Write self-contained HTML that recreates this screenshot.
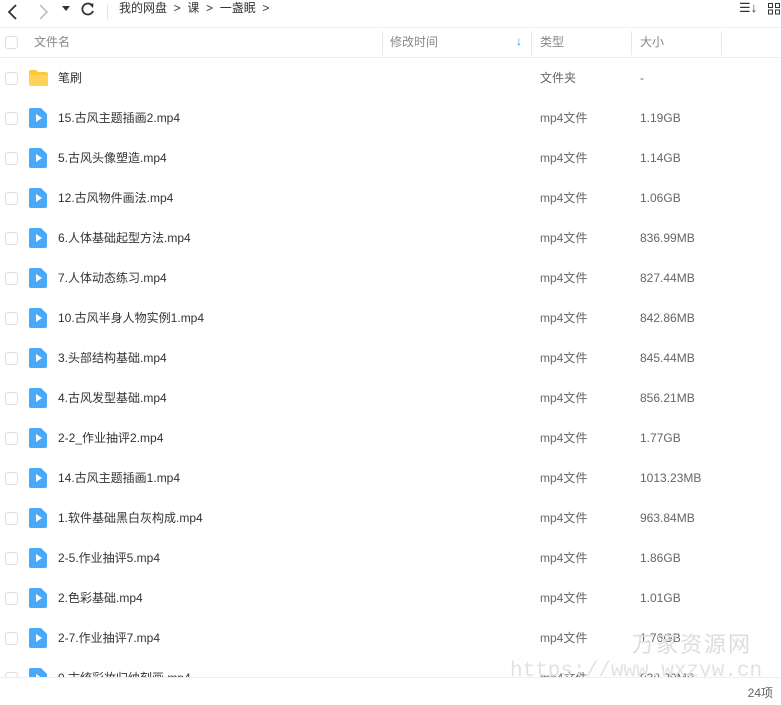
<!DOCTYPE html>
<html><head><meta charset="utf-8"><style>
*{margin:0;padding:0;box-sizing:border-box}
body{width:781px;height:705px;overflow:hidden;background:#fff;font-family:"Liberation Sans","Noto Sans CJK SC",sans-serif;font-size:12px;color:#333;position:relative}
.top{position:absolute;top:0;left:0;width:781px;height:28px;border-bottom:1px solid #f0f0f0}
.t{position:absolute;white-space:nowrap;line-height:16px;height:16px}
.hdr{position:absolute;top:28px;left:0;width:781px;height:30px;border-bottom:1px solid #eee;color:#888}
.div{position:absolute;top:3px;width:1px;height:24px;background:#e8e8e8}
.cb{position:absolute;left:5px;width:13px;height:13px;border:1px solid #ddd;border-radius:3px;background:#fff}
.row{position:absolute;left:0;width:781px;height:40px}
.row .t{top:12px}
.foot{position:absolute;top:677px;left:0;width:781px;height:28px;border-top:1px solid #eee;background:#fff}
</style></head><body>
<div class="top">
<svg class="t" style="left:6px;top:3px;height:18px" width="14" height="18" viewBox="0 0 14 18"><path d="M10 2 L3 9 L10 16" stroke="#333" stroke-width="1.8" fill="none"/></svg>
<svg class="t" style="left:36px;top:3px;height:18px" width="14" height="18" viewBox="0 0 14 18"><path d="M4 2 L11 9 L4 16" stroke="#bbb" stroke-width="1.5" fill="none"/></svg>
<svg class="t" style="left:62px;top:6px;height:6px" width="8" height="6"><path d="M0 0 L8 0 L4 5Z" fill="#333"/></svg>
<svg class="t" style="left:80px;top:1px" width="16" height="16" viewBox="0 0 16 16"><path d="M12.5 5 A5.5 5.5 0 1 0 13 10" stroke="#333" stroke-width="1.8" fill="none"/><path d="M9 3 L13.5 2.5 L13 7Z" fill="#333"/></svg>
<div class="t" style="left:107px;top:4px;width:1px;height:16px;background:#e5e5e5"></div>
<div class="t" style="left:119px;top:0px;font-size:12px;color:#333">我的网盘 &nbsp;&gt;&nbsp; 课 &nbsp;&gt;&nbsp; 一盏眠 &nbsp;&gt;</div>
<div class="t" style="left:739px;top:0px;font-size:13px;color:#333">☰↓</div>
<svg class="t" style="left:768px;top:3px" width="13" height="12"><rect x="0.5" y="0.5" width="4" height="4" stroke="#333" fill="none"/><rect x="7.5" y="0.5" width="4" height="4" stroke="#333" fill="none"/><rect x="0.5" y="7" width="4" height="4" stroke="#333" fill="none"/><rect x="7.5" y="7" width="4" height="4" stroke="#333" fill="none"/></svg>
</div>
<div class="hdr">
<div class="cb" style="top:8px"></div>
<div class="t" style="left:34px;top:6px">文件名</div>
<div class="div" style="left:382px"></div>
<div class="t" style="left:390px;top:6px">修改时间</div>
<div class="t" style="left:516px;top:5px;color:#1e90ff;font-weight:bold">↓</div>
<div class="div" style="left:531px"></div>
<div class="t" style="left:540px;top:6px">类型</div>
<div class="div" style="left:631px"></div>
<div class="t" style="left:640px;top:6px">大小</div>
<div class="div" style="left:721px"></div>
</div>
<div class="row" style="top:58px"><div class="cb" style="top:14px"></div>
<svg class="t" style="left:28px;top:11px;height:18px" width="21" height="18" viewBox="0 0 21 18"><path d="M1 3 Q1 1 3 1 L8 1 L10 3 L18 3 Q20 3 20 5 L20 16 Q20 17 18 17 L3 17 Q1 17 1 15Z" fill="#fcc93a"/><path d="M1 6 L20 6 L20 16 Q20 17 18 17 L3 17 Q1 17 1 15Z" fill="#fdd35a"/></svg>
<div class="t" style="left:58px">笔刷</div><div class="t" style="left:540px;color:#666">文件夹</div><div class="t" style="left:640px;color:#666">-</div></div>
<div id="rows"></div>
<div class="t" style="left:632px;top:632px;font-size:22px;line-height:26px;height:26px;color:#ddd;letter-spacing:2px">万家资源网</div>
<div class="t" style="left:510px;top:659px;font-size:21px;line-height:26px;height:26px;color:#e2e2e2;font-family:'Liberation Mono',monospace">https://www.wxzyw.cn</div>
<div class="foot"><div class="t" style="right:8px;top:7px;color:#666">24项</div></div>
<script>
var d=[["15.古风主题插画2.mp4","1.19GB"],["5.古风头像塑造.mp4","1.14GB"],["12.古风物件画法.mp4","1.06GB"],["6.人体基础起型方法.mp4","836.99MB"],["7.人体动态练习.mp4","827.44MB"],["10.古风半身人物实例1.mp4","842.86MB"],["3.头部结构基础.mp4","845.44MB"],["4.古风发型基础.mp4","856.21MB"],["2-2_作业抽评2.mp4","1.77GB"],["14.古风主题插画1.mp4","1013.23MB"],["1.软件基础黑白灰构成.mp4","963.84MB"],["2-5.作业抽评5.mp4","1.86GB"],["2.色彩基础.mp4","1.01GB"],["2-7.作业抽评7.mp4","1.76GB"],["9.古统彩妆归纳刻画.mp4","938.39MB"]];
var h="";d.forEach(function(r,i){var y=98+i*40;h+='<div class="row" style="top:'+y+'px"><div class="cb" style="top:14px"></div><svg class="t" style="left:29px;top:10px;height:20px" width="18" height="20" viewBox="0 0 18 20"><path d="M2 0 L12 0 L18 6 L18 18 Q18 20 16 20 L2 20 Q0 20 0 18 L0 2 Q0 0 2 0Z" fill="#4aa8f8"/><path d="M7 6 L13 10 L7 14Z" fill="#fff"/></svg><div class="t" style="left:58px">'+r[0]+'</div><div class="t" style="left:540px;color:#666">mp4文件</div><div class="t" style="left:640px;color:#666">'+r[1]+'</div></div>';});
document.getElementById("rows").innerHTML=h;
</script>
</body></html>
